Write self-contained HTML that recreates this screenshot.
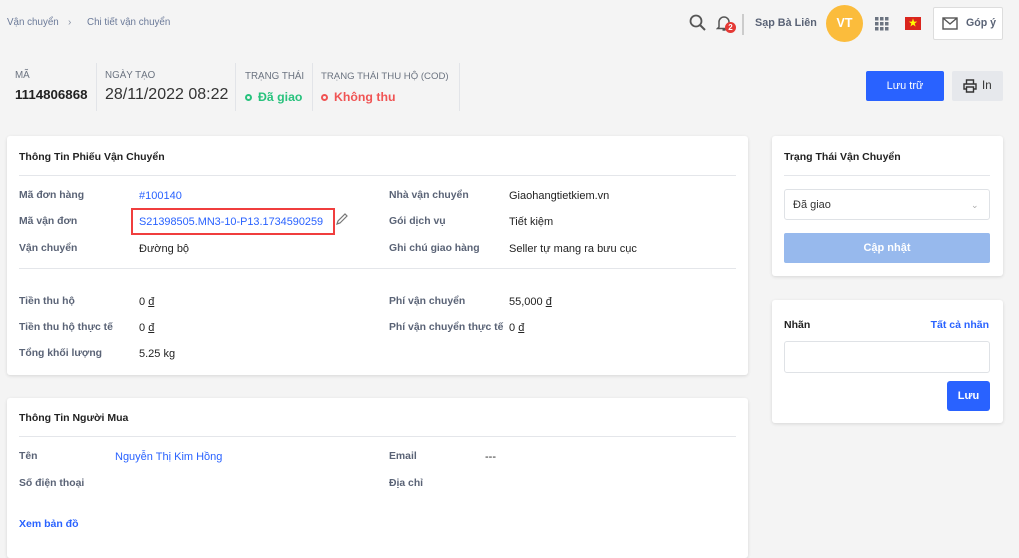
<!DOCTYPE html>
<html><head><meta charset="utf-8"><style>
*{box-sizing:border-box;margin:0;padding:0}
body{width:1019px;height:544px;overflow:hidden;background:#f4f4f4;font-family:"Liberation Sans","Noto Sans CJK SC",sans-serif;font-size:11px;color:#222;position:relative}
.a{position:absolute;white-space:nowrap;line-height:14px}
.card{position:absolute;background:#fff;border-radius:3px;box-shadow:0 1px 3px rgba(0,0,0,.12)}
.lbl{color:#5a6376;font-weight:bold;font-size:10.4px}
.h{font-weight:bold;font-size:10.5px;color:#222}
.hr{position:absolute;height:1px;background:#e4e6ea}
.blue{color:#2962ff}
.sl{color:#6b7380;font-size:9.8px}
.vs{position:absolute;width:1px;background:#e2e4e8;top:63px;height:48px}
</style></head><body>
<div class="a" style="left:7px;top:16px;font-size:9.8px;color:#6b7a99">Vận chuyển</div>
<div class="a" style="left:68px;top:16px;font-size:10px;color:#8a93a5">›</div>
<div class="a" style="left:87px;top:16px;font-size:9.8px;color:#6b7a99">Chi tiết vận chuyển</div>

<svg class="a" style="left:689px;top:14px" width="18" height="18" viewBox="0 0 18 18"><circle cx="7" cy="7" r="5.5" fill="none" stroke="#555" stroke-width="1.8"/><path d="M11 11l5 5" stroke="#555" stroke-width="2"/></svg>
<svg class="a" style="left:716px;top:14px" width="16" height="18" viewBox="0 0 16 18"><path d="M3 13V8a5 5 0 0110 0v5l1.5 1.5h-13z M6.5 16h3" fill="none" stroke="#555" stroke-width="1.5"/></svg>
<div class="a" style="left:725px;top:22px;width:11px;height:11px;border-radius:50%;background:#e53935;color:#fff;font-size:8px;font-weight:bold;text-align:center;line-height:11px">2</div>
<div class="a" style="left:742px;top:14px;width:2px;height:21px;background:#ccc"></div>
<div class="a" style="left:755px;top:16px;font-weight:bold;color:#5a6376;font-size:10.8px">Sạp Bà Liên</div>
<div class="a" style="left:826px;top:5px;width:37px;height:37px;border-radius:50%;background:#fbbc3c;color:#fff;font-weight:bold;text-align:center;line-height:37px;font-size:12.5px">VT</div>
<svg class="a" style="left:875px;top:17px" width="14" height="14" viewBox="0 0 14 14" fill="#6b7380"><rect x="0" y="0" width="3.5" height="3.5"/><rect x="5" y="0" width="3.5" height="3.5"/><rect x="10" y="0" width="3.5" height="3.5"/><rect x="0" y="5" width="3.5" height="3.5"/><rect x="5" y="5" width="3.5" height="3.5"/><rect x="10" y="5" width="3.5" height="3.5"/><rect x="0" y="10" width="3.5" height="3.5"/><rect x="5" y="10" width="3.5" height="3.5"/><rect x="10" y="10" width="3.5" height="3.5"/></svg>
<div class="a" style="left:905px;top:17px;width:16px;height:13px;background:#da251d;color:#ff0;font-size:9px;text-align:center;line-height:13px">★</div>
<div class="a" style="left:933px;top:7px;width:70px;height:33px;background:#fff;border:1px solid #ddd;border-radius:2px"></div>
<svg class="a" style="left:942px;top:17px" width="16" height="13" viewBox="0 0 16 13"><rect x="1" y="1" width="14" height="11" fill="none" stroke="#555" stroke-width="1.4"/><path d="M1 1l7 6 7-6" fill="none" stroke="#555" stroke-width="1.4"/></svg>
<div class="a" style="left:966px;top:16px;font-weight:bold;color:#5a6376;font-size:10.6px">Góp ý</div>

<div class="a sl" style="left:15px;top:69px">MÃ</div>
<div class="a" style="left:15px;top:88px;font-weight:bold;font-size:13.3px">1114806868</div>
<div class="vs" style="left:96px"></div>
<div class="a sl" style="left:105px;top:69px">NGÀY TẠO</div>
<div class="a" style="left:105px;top:86px;font-size:16px;line-height:18px;color:#333">28/11/2022 08:22</div>
<div class="vs" style="left:235px"></div>
<div class="a sl" style="left:245px;top:70px">TRẠNG THÁI</div>
<div class="a" style="left:245px;top:90px;font-weight:bold;font-size:12.3px;color:#28c27d"><span style="display:inline-block;width:7px;height:7px;border:2px solid #28c27d;border-radius:50%;margin-right:6px"></span>Đã giao</div>
<div class="vs" style="left:312px"></div>
<div class="a sl" style="left:321px;top:70px;font-size:9.6px">TRẠNG THÁI THU HỘ (COD)</div>
<div class="a" style="left:321px;top:90px;font-weight:bold;font-size:12.3px;color:#f05454"><span style="display:inline-block;width:7px;height:7px;border:2px solid #f05454;border-radius:50%;margin-right:6px"></span>Không thu</div>
<div class="vs" style="left:459px"></div>

<div class="a" style="left:866px;top:71px;width:78px;height:30px;background:#2962ff;border-radius:2px;color:#fff;text-align:center;line-height:30px;font-size:11px">Lưu trữ</div>
<div class="a" style="left:952px;top:71px;width:51px;height:30px;background:#e6e8ec;border-radius:2px;color:#333;line-height:30px;font-size:11.5px"><svg style="position:absolute;left:11px;top:8px" width="14" height="14" viewBox="0 0 14 14"><path d="M3.5 5V1h7v4M3.5 10H1V5h12v5h-2.5M3.5 8h7v5h-7z" fill="none" stroke="#333" stroke-width="1.4"/></svg><span style="position:absolute;left:30px">In</span></div>

<div class="card" style="left:7px;top:136px;width:741px;height:239px"></div>
<div class="a h" style="left:19px;top:150px">Thông Tin Phiếu Vận Chuyển</div>
<div class="hr" style="left:19px;top:175px;width:717px"></div>
<div class="a lbl" style="left:19px;top:189px">Mã đơn hàng</div>
<div class="a blue" style="left:139px;top:189px">#100140</div>
<div class="a lbl" style="left:19px;top:215px">Mã vận đơn</div>
<div class="a" style="left:131px;top:208px;width:204px;height:27px;border:2px solid #f03e3e"></div>
<div class="a blue" style="left:139px;top:215px;font-size:10.9px">S21398505.MN3-10-P13.1734590259</div>
<svg class="a" style="left:336px;top:213px" width="12" height="12" viewBox="0 0 12 12"><path d="M1 11l1-3 7-7 2 2-7 7z" fill="none" stroke="#777" stroke-width="1.2"/></svg>
<div class="a lbl" style="left:19px;top:242px">Vận chuyển</div>
<div class="a" style="left:139px;top:242px">Đường bộ</div>
<div class="a lbl" style="left:389px;top:189px">Nhà vận chuyển</div>
<div class="a" style="left:509px;top:189px">Giaohangtietkiem.vn</div>
<div class="a lbl" style="left:389px;top:215px">Gói dịch vụ</div>
<div class="a" style="left:509px;top:215px">Tiết kiệm</div>
<div class="a lbl" style="left:389px;top:242px">Ghi chú giao hàng</div>
<div class="a" style="left:509px;top:242px">Seller tự mang ra bưu cục</div>
<div class="hr" style="left:19px;top:268px;width:717px"></div>
<div class="a lbl" style="left:19px;top:295px">Tiền thu hộ</div>
<div class="a" style="left:139px;top:295px">0 <u>đ</u></div>
<div class="a lbl" style="left:19px;top:321px">Tiền thu hộ thực tế</div>
<div class="a" style="left:139px;top:321px">0 <u>đ</u></div>
<div class="a lbl" style="left:19px;top:347px">Tổng khối lượng</div>
<div class="a" style="left:139px;top:347px">5.25 kg</div>
<div class="a lbl" style="left:389px;top:295px">Phí vận chuyển</div>
<div class="a" style="left:509px;top:295px">55,000 <u>đ</u></div>
<div class="a lbl" style="left:389px;top:321px">Phí vận chuyển thực tế</div>
<div class="a" style="left:509px;top:321px">0 <u>đ</u></div>

<div class="card" style="left:7px;top:398px;width:741px;height:160px"></div>
<div class="a h" style="left:19px;top:411px">Thông Tin Người Mua</div>
<div class="hr" style="left:19px;top:436px;width:717px"></div>
<div class="a lbl" style="left:19px;top:450px">Tên</div>
<div class="a blue" style="left:115px;top:450px">Nguyễn Thị Kim Hồng</div>
<div class="a lbl" style="left:19px;top:477px">Số điện thoại</div>
<div class="a lbl" style="left:389px;top:450px">Email</div>
<div class="a" style="left:485px;top:450px">---</div>
<div class="a lbl" style="left:389px;top:477px">Địa chỉ</div>
<div class="a blue" style="left:19px;top:517px;font-weight:bold;font-size:10.5px">Xem bản đồ</div>

<div class="card" style="left:772px;top:136px;width:231px;height:140px"></div>
<div class="a h" style="left:784px;top:150px">Trạng Thái Vận Chuyển</div>
<div class="hr" style="left:784px;top:175px;width:206px"></div>
<div class="a" style="left:784px;top:189px;width:206px;height:31px;border:1px solid #dfe2e6;border-radius:3px"></div>
<div class="a" style="left:793px;top:198px;color:#333">Đã giao</div>
<div class="a" style="left:971px;top:198px;color:#aaa;font-size:9px">⌄</div>
<div class="a" style="left:784px;top:233px;width:206px;height:30px;background:#97b9ed;border-radius:2px;color:#fff;text-align:center;line-height:30px;font-weight:bold;font-size:11px">Cập nhật</div>

<div class="card" style="left:772px;top:300px;width:231px;height:123px"></div>
<div class="a h" style="left:784px;top:318px">Nhãn</div>
<div class="a blue" style="right:30px;top:318px;font-weight:bold;font-size:10.5px">Tất cả nhãn</div>
<div class="a" style="left:784px;top:341px;width:206px;height:32px;border:1px solid #dfe2e6;border-radius:3px"></div>
<div class="a" style="left:947px;top:381px;width:43px;height:30px;background:#2962ff;border-radius:3px;color:#fff;text-align:center;line-height:30px;font-weight:bold;font-size:11px">Lưu</div>
</body></html>
